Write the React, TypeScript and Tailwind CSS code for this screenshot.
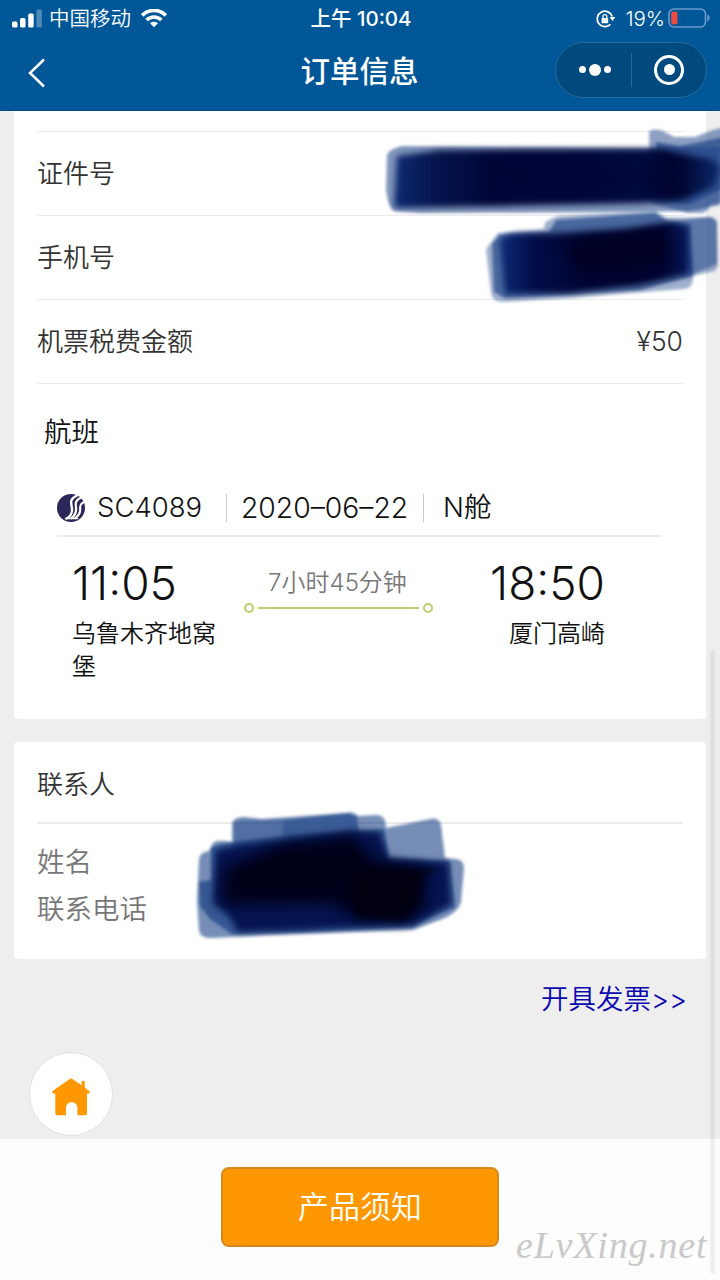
import React from "react";

const SignalIcon = () => (
  <svg width="31" height="20" viewBox="0 0 31 20" fill="white">
    <rect x="0" y="12.5" width="5.5" height="6" rx="1.5" />
    <rect x="8" y="9" width="5.5" height="9.5" rx="1.5" />
    <rect x="16.2" y="4.5" width="5.5" height="14" rx="1.5" />
    <rect x="24.4" y="0.5" width="5.5" height="18" rx="1.5" opacity="0.3" />
  </svg>
);

const WifiIcon = () => (
  <svg width="26" height="20" viewBox="0 0 26 20" fill="none" stroke="white" strokeWidth="3.6">
    <path d="M1.2 6.4C7.8 -.3 18.2 -.3 24.8 6.4" />
    <path d="M5.6 11C9.8 6.9 16.2 6.9 20.4 11" />
    <path d="M9 14.2c2.3-2 5.7-2 8 0L13 18.2Z" fill="white" stroke="none" />
  </svg>
);

const RotationLockIcon = () => (
  <svg width="20" height="18" viewBox="0 0 20 18" fill="none">
    <path d="M16.3 6.6A7.7 7.7 0 1 0 14.4 14.4" stroke="white" strokeWidth="1.7" />
    <path d="M13.6 7h5.8l-2.9 4Z" fill="white" />
    <rect x="5.6" y="8" width="6.6" height="5.2" rx="0.8" fill="white" />
    <path d="M7 8.2V6.6a1.9 1.9 0 0 1 3.8 0v1.6" stroke="white" strokeWidth="1.3" />
  </svg>
);

const BatteryIcon = () => (
  <svg width="43" height="20" viewBox="0 0 43 20" fill="none" className="-mt-[2px]">
    <rect x="2" y="1" width="36.5" height="18" rx="5" stroke="#6b9bcb" strokeWidth="1.6" />
    <rect x="4.2" y="3.4" width="6.3" height="13.2" rx="2.4" fill="#eb4b43" />
    <path d="M40.3 6.6q2.4 1 2.4 3.4t-2.4 3.4Z" fill="#6b9bcb" />
  </svg>
);

const AirlineLogo = () => (
  <svg width="28" height="28" viewBox="0 0 28 28">
    <circle cx="14" cy="14" r="14" fill="#292859" />
    <g fill="none" stroke="white" strokeLinecap="round">
      <path d="M20 1.5C10.5 5.5 15.5 11 15 16.5c-.2 3.7-2.2 6.3-5.5 8" strokeWidth="2.4" />
      <path d="M24 3.5c-8 4-4.3 8-5 13-.4 3.4-2 5.8-4.5 7.6" strokeWidth="2.3" />
      <path d="M27 8c-5.5 2.5-3.3 6-4 9.5-.5 2.8-2.4 5-4.5 6.5" strokeWidth="2.1" />
      <path d="M8.5 24.6h12" strokeWidth="1.5" />
    </g>
  </svg>
);

const HomeIcon = () => (
  <svg width="38" height="38" viewBox="0 0 38 38" fill="#ff9800">
    <path d="M18 .7q1-.6 2 0l9.6 6.6V4q0-1.3 1.6-1.3T32.8 4v5.7l4.2 3q1.5 1.3.4 2.4-.5.5-2.4.3v19.8q0 2-2 2h-7.6V30c0-7.6-11.4-7.6-11.4 0v7.2H5.3q-2 0-2-2V15.4q-2 .3-2.7-.3-1-1.2.4-2.4Z" />
  </svg>
);

// Marker strokes over the private fields
const MarkerStrokes = () => (
  <svg
    className="pointer-events-none absolute left-0 top-0"
    width="720"
    height="1280"
    viewBox="0 0 720 1280"
  >
    <defs>
      <filter id="edge" colorInterpolationFilters="sRGB" x="-10%" y="-20%" width="120%" height="140%">
        <feGaussianBlur stdDeviation="1.7" />
      </filter>
      <filter id="soft" colorInterpolationFilters="sRGB" x="-15%" y="-30%" width="130%" height="160%">
        <feGaussianBlur stdDeviation="3" />
      </filter>
      <filter id="wide" colorInterpolationFilters="sRGB" x="-30%" y="-50%" width="160%" height="200%">
        <feGaussianBlur stdDeviation="7" />
      </filter>
      <linearGradient id="idFill">
        <stop offset="0" stopColor="#0d2a72" />
        <stop offset="0.12" stopColor="#05154e" />
        <stop offset="0.3" stopColor="#000738" />
        <stop offset="0.6" stopColor="#00083c" />
        <stop offset="0.75" stopColor="#030d44" />
        <stop offset="0.86" stopColor="#00042e" />
        <stop offset="1" stopColor="#0c2768" />
      </linearGradient>
      <linearGradient id="phoneFill">
        <stop offset="0" stopColor="#0b2a74" />
        <stop offset="0.18" stopColor="#020d48" />
        <stop offset="0.5" stopColor="#000430" />
        <stop offset="0.85" stopColor="#000432" />
        <stop offset="1" stopColor="#061a5c" />
      </linearGradient>
    </defs>

    <g filter="url(#edge)" fill="#1b4285">
      <path opacity="0.55" d="M387 155Q389 149 402 146L650 148 720 147V205L690 211 640 212 420 213 394 211Q388 207 386 190Z" />
      <path opacity="0.5" d="M649 131Q656 128 663 131L674 137H695L710 131 724 127V202L710 205Q707 214 700 213H687L651 203Z" />
      <path opacity="0.65" d="M656 142 680 146 724 137V188L690 204 658 202Z" />
    </g>
    <path filter="url(#soft)" fill="url(#idFill)" d="M397 156 440 150 660 149 680 154 711 159 720 168 714 186 684 200 640 203 394 208Z" />
    <path filter="url(#wide)" opacity="0.5" fill="#000334" d="M480 160 640 158 685 155 690 190 640 194 480 198Z" />

    <g filter="url(#edge)" fill="#1b4285">
      <path opacity="0.42" d="M486 249 492 241 498 233 545 229Q540 222 558 216L655 211 667 218 708 217Q717 217 717 225L718 264Q718 271 710 272L693 276Q694 288 684 289L570 298 504 302Q492 302 491 293Z" />
      <path opacity="0.65" d="M492 244 500 235 549 232 556 220 655 213 669 222 690 224 693 276 640 290 505 298 494 292Z" />
      <path opacity="0.5" d="M668 222 708 217Q717 217 717 225L717 264 691 275Z" />
    </g>
    <path filter="url(#soft)" fill="url(#phoneFill)" d="M500 239 512 234 565 233 625 229 670 222 688 226 690 274 640 285 570 293 505 294Z" />
    <path filter="url(#wide)" opacity="0.8" fill="#000020" d="M563 242 665 232 671 263 575 273Z" />

    <g filter="url(#edge)" fill="#1b4285">
      <path opacity="0.6" d="M199 860Q199 852 209 851L213 843Q217 839 232 842L232 823Q235 816 245 817L262 819 345 813Q354 811 358 816L378 815Q386 816 386 828L430 819Q439 817 441 825L445 858 456 859Q464 860 464 868L461 902Q458 913 440 920L412 930 300 934 210 938Q200 938 199 930L197 900Z" />
      <path opacity="0.65" d="M283 820 349 813 357 817 360 840 384 845 387 862 283 862Z" />
      <path opacity="0.4" d="M234 821 283 819 283 850 234 850Z" />
      <path opacity="0.7" d="M211 847 234 842 285 836 384 829 389 858 450 861 455 907 432 917 412 927 300 932 232 934 210 919 200 906 199 882 211 880Z" />
    </g>
    <path filter="url(#soft)" opacity="0.96" fill="#04124e" d="M216 850 240 845 285 840 350 831 380 832 388 859 448 862 451 904 415 924 300 930 238 932 228 915 213 903Z" />
    <path filter="url(#wide)" fill="#000018" d="M225 868 282 844 355 837 374 860 425 868 426 906 405 922 356 918 332 903 222 904Z" />
    <path filter="url(#soft)" opacity="0.7" fill="#00000e" d="M352 871 438 868 417 883 417 902 405 920 356 917Z" />
  </svg>
);

const InfoRow = ({ label, value }: { label: string; value?: string }) => (
  <div className="flex h-[84px] items-center justify-between border-b border-[#ececec] pr-px text-[26px] text-[#333]">
    <span>{label}</span>
    {value && <span className="text-[26.5px]">{value}</span>}
  </div>
);

const Header = () => (
  <header className="h-[111px] border-b border-[#004c88] bg-[#005798] text-white">
    <div className="grid h-[38px] grid-cols-3 items-center pl-3 pr-[10px] text-[20.5px] leading-9">
      <div className="flex items-center">
        <SignalIcon />
        <span className="ml-[6px] mr-[10px]">中国移动</span>
        <WifiIcon />
      </div>
      <div className="text-center font-medium">上午 10:04</div>
      <div className="flex items-center justify-end">
        <RotationLockIcon />
        <span className="ml-[9px] mr-[2px]">19%</span>
        <BatteryIcon />
      </div>
    </div>
    <div className="grid h-[65px] grid-cols-[1fr_auto_1fr] items-center pl-7 pr-[13px]">
      <svg width="18" height="30" viewBox="0 0 18 30" fill="none" stroke="white" strokeWidth="2.5" className="mt-1">
        <path d="M16 1.5 2 15l14 13.5" />
      </svg>
      <h1 className="-ml-4 mt-[2px] whitespace-nowrap text-center text-[29.5px] font-medium">订单信息</h1>
      <div className="-mt-[2px] flex h-14 w-[152px] items-center justify-self-end rounded-full border border-[#286a9f] bg-[#004a7e]">
        <div className="flex w-[75px] items-center justify-center gap-[3px] pl-[3px]">
          <i className="size-[7px] rounded-full bg-white" />
          <i className="size-[12px] rounded-full bg-white" />
          <i className="size-[7px] rounded-full bg-white" />
        </div>
        <div className="h-[34px] w-px bg-[#286a9f]" />
        <div className="flex flex-1 justify-center">
          <div className="flex size-[30px] items-center justify-center rounded-full border-[3.5px] border-white">
            <i className="size-[11px] rounded-full bg-white" />
          </div>
        </div>
      </div>
    </div>
  </header>
);

const FlightCard = () => (
  <section className="h-[608px] rounded-b bg-white px-[23px] pt-5">
    <div className="-mr-px border-t border-[#ececec]">
      <InfoRow label="证件号" />
      <InfoRow label="手机号" />
      <InfoRow label="机票税费金额" value="¥50" />
    </div>
    <h2 className="ml-[7px] mt-7 text-[27.5px] leading-10 text-[#111]">航班</h2>

    <div className="ml-5 mr-[21px] mt-[29px] flex h-[56px] items-center border-b-2 border-[#ececec] text-[27.5px] text-[#111]">
      <AirlineLogo />
      <span className="ml-3 w-[106px] whitespace-nowrap">SC4089</span>
      <i className="ml-[23px] h-7 w-px bg-[#ccc]" />
      <span className="ml-[14px] w-[168px] whitespace-nowrap text-[28.3px]">2020–06–22</span>
      <i className="ml-[14px] h-7 w-px bg-[#ccc]" />
      <span className="ml-[19px] whitespace-nowrap">N舱</span>
    </div>

    <div className="ml-[35px] mt-[18px] flex text-[#111]">
      <div className="w-[148px]">
        <div className="text-[46px] leading-[56px]">11:05</div>
        <div className="mt-[6px] text-2xl leading-[33px]">乌鲁木齐地窝堡</div>
      </div>
      <div className="ml-6 w-[189px]">
        <div className="mt-3 whitespace-nowrap pr-[2px] text-center text-2xl leading-8 text-[#777]">7小时45分钟</div>
        <div className="mt-1 flex items-center gap-1">
          <i className="size-[10px] rounded-full border-2 border-[#b9cf70]" />
          <i className="h-[2px] flex-1 bg-[#b9cf70]" />
          <i className="size-[10px] rounded-full border-2 border-[#b9cf70]" />
        </div>
      </div>
      <div className="ml-[50px] w-[122px] text-right">
        <div className="text-[46px] leading-[56px]">18:50</div>
        <div className="mt-[6px] text-2xl leading-[33px]">厦门高崎</div>
      </div>
    </div>
  </section>
);

const ContactCard = () => (
  <section className="mt-[23px] h-[217px] rounded bg-white px-[23px]">
    <h2 className="h-[82px] border-b-2 border-[#ececec] text-[26px] leading-[85px] text-[#333]">联系人</h2>
    <div className="pt-[15px] text-[27.5px] leading-[47px] text-[#777]">
      <p>姓名</p>
      <p>联系电话</p>
    </div>
  </section>
);

export default function App() {
  return (
    <div className="relative flex h-[1280px] w-[720px] flex-col overflow-hidden bg-[#eee] font-['Inter','Noto_Sans_CJK_SC',sans-serif] font-[350]">
      <Header />
      <main className="h-[1028px] px-[14px]">
        <FlightCard />
        <ContactCard />
        <div className="mt-[19px] pr-[19px] text-right text-[27.5px] leading-[42px] text-[#0b08ae]">开具发票&gt;&gt;</div>
        <button className="ml-[15px] mt-8 flex size-[84px] items-center justify-center rounded-full border border-[#e2e2e2] bg-white pt-[5px]">
          <HomeIcon />
        </button>
      </main>
      <footer className="flex flex-1 justify-center bg-[#fdfdfd] pt-7">
        <button className="h-20 w-[278px] rounded-lg border-2 border-[#d7881a] bg-[#ff9800] text-[31px] text-white">
          产品须知
        </button>
      </footer>

      <MarkerStrokes />
      <div className="absolute right-[5px] top-[650px] h-[624px] w-[5px] rounded-full bg-black/5" />
      <div className="absolute left-[516px] top-[1222px] whitespace-nowrap font-['Liberation_Serif',serif] text-[38px] font-normal italic leading-[46px] tracking-[0.8px] text-[#c9c9c9]">
        eLvXing.net
      </div>
    </div>
  );
}
